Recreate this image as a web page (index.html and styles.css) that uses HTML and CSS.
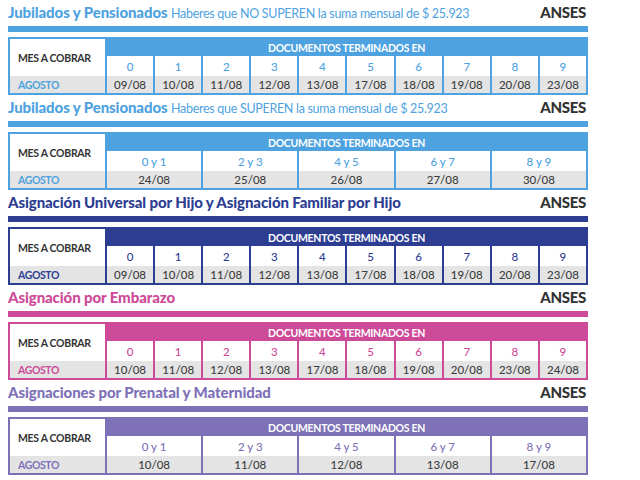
FILE: index.html
```html
<!DOCTYPE html>
<html lang="es">
<head>
<meta charset="utf-8">
<title>Calendario ANSES Agosto</title>
<link rel="stylesheet" href="styles.css">
</head>
<body>
<main class="page">

  <section class="sec c-blue">
    <div class="head">
      <h2 class="title"><b>Jubilados y Pensionados</b> <span class="sub">Haberes que NO SUPEREN la suma mensual de $ 25.923</span></h2>
      <span class="brand">ANSES</span>
    </div>
    <div class="band"></div>
    <div class="grid g10">
      <div class="mes">MES A COBRAR</div>
      <div class="doc">DOCUMENTOS TERMINADOS EN</div>
      <div class="dg">0</div><div class="dg">1</div><div class="dg">2</div><div class="dg">3</div><div class="dg">4</div>
      <div class="dg">5</div><div class="dg">6</div><div class="dg">7</div><div class="dg">8</div><div class="dg">9</div>
      <div class="mon">AGOSTO</div>
      <div class="dt">09/08</div><div class="dt">10/08</div><div class="dt">11/08</div><div class="dt">12/08</div><div class="dt">13/08</div>
      <div class="dt">17/08</div><div class="dt">18/08</div><div class="dt">19/08</div><div class="dt">20/08</div><div class="dt">23/08</div>
    </div>
  </section>

  <section class="sec c-blue">
    <div class="head">
      <h2 class="title"><b>Jubilados y Pensionados</b> <span class="sub">Haberes que SUPEREN la suma mensual de $ 25.923</span></h2>
      <span class="brand">ANSES</span>
    </div>
    <div class="band"></div>
    <div class="grid g5">
      <div class="mes">MES A COBRAR</div>
      <div class="doc">DOCUMENTOS TERMINADOS EN</div>
      <div class="dg">0 y 1</div><div class="dg">2 y 3</div><div class="dg">4 y 5</div><div class="dg">6 y 7</div><div class="dg">8 y 9</div>
      <div class="mon">AGOSTO</div>
      <div class="dt">24/08</div><div class="dt">25/08</div><div class="dt">26/08</div><div class="dt">27/08</div><div class="dt">30/08</div>
    </div>
  </section>

  <section class="sec c-navy">
    <div class="head">
      <h2 class="title"><b>Asignación Universal por Hijo y Asignación Familiar por Hijo</b></h2>
      <span class="brand">ANSES</span>
    </div>
    <div class="band"></div>
    <div class="grid g10">
      <div class="mes">MES A COBRAR</div>
      <div class="doc">DOCUMENTOS TERMINADOS EN</div>
      <div class="dg">0</div><div class="dg">1</div><div class="dg">2</div><div class="dg">3</div><div class="dg">4</div>
      <div class="dg">5</div><div class="dg">6</div><div class="dg">7</div><div class="dg">8</div><div class="dg">9</div>
      <div class="mon">AGOSTO</div>
      <div class="dt">09/08</div><div class="dt">10/08</div><div class="dt">11/08</div><div class="dt">12/08</div><div class="dt">13/08</div>
      <div class="dt">17/08</div><div class="dt">18/08</div><div class="dt">19/08</div><div class="dt">20/08</div><div class="dt">23/08</div>
    </div>
  </section>

  <section class="sec c-pink">
    <div class="head">
      <h2 class="title"><b>Asignación por Embarazo</b></h2>
      <span class="brand">ANSES</span>
    </div>
    <div class="band"></div>
    <div class="grid g10">
      <div class="mes">MES A COBRAR</div>
      <div class="doc">DOCUMENTOS TERMINADOS EN</div>
      <div class="dg">0</div><div class="dg">1</div><div class="dg">2</div><div class="dg">3</div><div class="dg">4</div>
      <div class="dg">5</div><div class="dg">6</div><div class="dg">7</div><div class="dg">8</div><div class="dg">9</div>
      <div class="mon">AGOSTO</div>
      <div class="dt">10/08</div><div class="dt">11/08</div><div class="dt">12/08</div><div class="dt">13/08</div><div class="dt">17/08</div>
      <div class="dt">18/08</div><div class="dt">19/08</div><div class="dt">20/08</div><div class="dt">23/08</div><div class="dt">24/08</div>
    </div>
  </section>

  <section class="sec c-purple">
    <div class="head">
      <h2 class="title"><b>Asignaciones por Prenatal y Maternidad</b></h2>
      <span class="brand">ANSES</span>
    </div>
    <div class="band"></div>
    <div class="grid g5">
      <div class="mes">MES A COBRAR</div>
      <div class="doc">DOCUMENTOS TERMINADOS EN</div>
      <div class="dg">0 y 1</div><div class="dg">2 y 3</div><div class="dg">4 y 5</div><div class="dg">6 y 7</div><div class="dg">8 y 9</div>
      <div class="mon">AGOSTO</div>
      <div class="dt">10/08</div><div class="dt">11/08</div><div class="dt">12/08</div><div class="dt">13/08</div><div class="dt">17/08</div>
    </div>
  </section>

</main>
</body>
</html>
```

FILE: styles.css
```css
html, body {
  margin: 0;
  padding: 0;
  background: #ffffff;
}

body {
  font-family: Lato, "Open Sans", "Noto Sans", sans-serif;
  color: #333333;
}

.page {
  width: 580px;
  padding-left: 8px;
}

.c-blue   { --c: #4ea2df; --t: #4ea2df; }
.c-navy   { --c: #2c3d92; --t: #2c3d92; }
.c-pink   { --c: #cd4a98; --t: #cd4a98; }
.c-purple { --c: #7e71b7; --t: #7e71b7; }

.sec {
  height: 95px;
}

.head {
  height: 24px;
  display: flex;
  justify-content: space-between;
  align-items: baseline;
  line-height: 24px;
  padding-right: 2px;
}

.title {
  margin: 0;
  font-size: 15px;
  font-weight: 700;
  color: var(--t);
  letter-spacing: -0.1px;
  white-space: nowrap;
}

.title .sub {
  font-weight: 400;
  font-size: 12.5px;
  letter-spacing: -0.3px;
}

.brand {
  font-size: 15px;
  font-weight: 900;
  color: #333333;
  letter-spacing: -0.3px;
}

.band {
  margin-top: 2px;
  height: 6px;
  background: var(--c);
}

.grid {
  margin-top: 5px;
  display: grid;
  grid-template-rows: 17px 20px 17px;
  column-gap: 2px;
  border: 2px solid var(--c);
  background: var(--c);
  font-size: 11px;
}

.g10 { grid-template-columns: 95px repeat(10, 1fr); }
.g5  { grid-template-columns: 95px repeat(5, 1fr); }

.grid > div {
  display: flex;
  align-items: center;
  justify-content: center;
}

.mes {
  grid-row: 1 / 3;
  grid-column: 1;
  background: #ffffff;
  justify-content: flex-start !important;
  padding-left: 8px;
  font-size: 10.5px;
  letter-spacing: -0.3px;
  font-weight: 700;
  color: #333333;
}

.doc {
  grid-row: 1;
  grid-column: 2 / -1;
  background: var(--c);
  color: #ffffff;
  font-size: 10.5px;
  letter-spacing: -0.3px;
  font-weight: 700;
}

.dg {
  background: #ffffff;
  color: var(--t);
  font-size: 11.5px;
  font-weight: 500;
}

.mon {
  background: #e4e4e4;
  justify-content: flex-start !important;
  padding-left: 8px;
  font-size: 10.5px;
  letter-spacing: -0.4px;
  font-weight: 700;
  color: var(--t);
}

.dt {
  background: #e4e4e4;
  color: #3d3d3d;
  font-size: 11.5px;
  font-weight: 500;
}
```
